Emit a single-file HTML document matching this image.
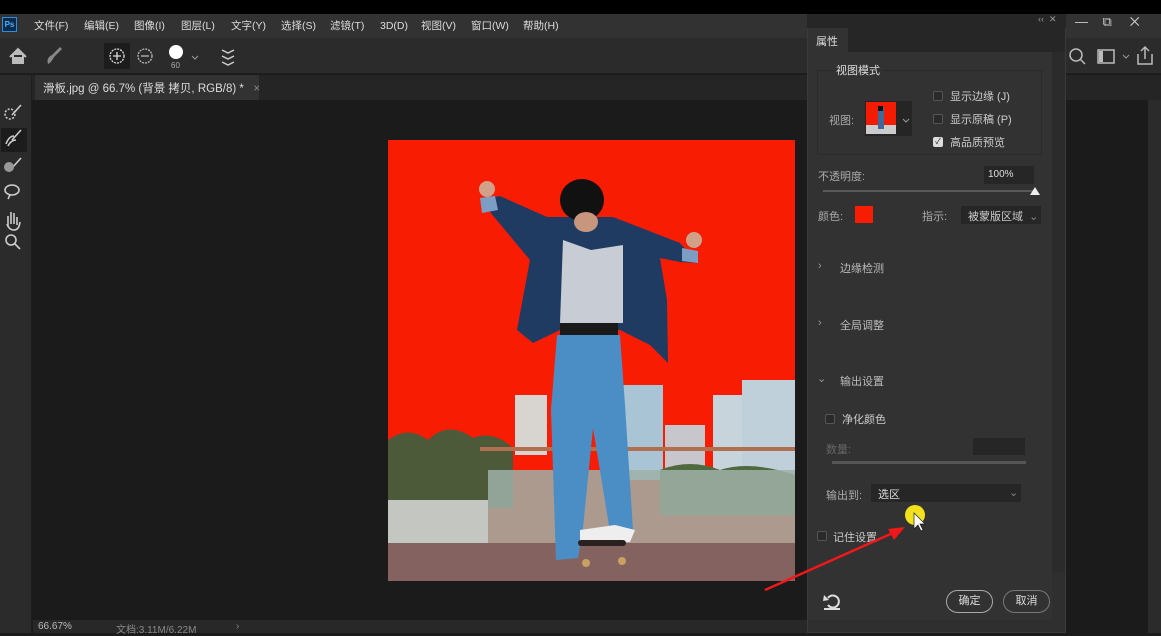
<!DOCTYPE html>
<html><head><meta charset="utf-8"><style>
*{margin:0;padding:0;box-sizing:border-box}
body{width:1161px;height:633px;overflow:hidden;background:#1b1b1b;font-family:"Liberation Sans","Noto Sans CJK SC",sans-serif;color:#ccc;position:relative;font-size:11px}
.a{position:absolute}
.t{position:absolute;white-space:nowrap}
.m{position:absolute;top:19px;font-size:10.5px;line-height:14px;color:#ddd;white-space:nowrap}
.cb{position:absolute;width:10px;height:10px;border:1px solid #555;border-radius:2px;background:#2a2a2a}
</style></head><body>
<div class="a" style="left:0;top:0;width:1161px;height:14px;background:#000"></div>
<div class="a" style="left:0;top:14px;width:1161px;height:24px;background:#323232"></div>
<div class="a" style="left:2px;top:17px;width:15px;height:15px;background:#0c2a4a;border:1px solid #2f8de0;color:#4fb0ff;font-size:8px;line-height:13px;text-align:center;font-weight:bold">Ps</div>
<span class="m" style="left:34px">文件(F)</span><span class="m" style="left:84px">编辑(E)</span><span class="m" style="left:134px">图像(I)</span><span class="m" style="left:181px">图层(L)</span><span class="m" style="left:231px">文字(Y)</span><span class="m" style="left:281px">选择(S)</span><span class="m" style="left:330px">滤镜(T)</span><span class="m" style="left:380px">3D(D)</span><span class="m" style="left:421px">视图(V)</span><span class="m" style="left:471px">窗口(W)</span><span class="m" style="left:523px">帮助(H)</span>
<div class="t" style="left:1075px;top:14px;font-size:13px;color:#ccc">—&nbsp;&nbsp;&nbsp;&nbsp;⧉&nbsp;&nbsp;&nbsp;&nbsp;&nbsp;✕</div>
<div class="a" style="left:0;top:38px;width:1161px;height:36px;background:#2b2b2b;border-bottom:1px solid #1e1e1e"></div>
<svg class="a" style="left:0;top:38px" width="260" height="36">
<path d="M10 19 L18 11 L26 19 M13 17 V25 H23 V17" fill="#bbb" stroke="#bbb" stroke-width="2"/>
<path d="M48 26 q-2-6 4-9 l8-8 2 2 -8 8 q-3 6-6 7z" fill="#888"/>
<rect x="104" y="5" width="26" height="26" fill="#1c1c1c"/>
<circle cx="117" cy="18" r="7" fill="none" stroke="#ddd" stroke-width="1.3" stroke-dasharray="2 1"/><path d="M113 18h8M117 14v8" stroke="#ddd" stroke-width="1.3"/>
<circle cx="145" cy="18" r="7" fill="none" stroke="#bbb" stroke-width="1.3" stroke-dasharray="2 1"/><path d="M141 18h8" stroke="#bbb" stroke-width="1.3"/>
<circle cx="176" cy="14" r="7" fill="#fff"/><text x="171" y="30" font-size="8" fill="#aaa">60</text>
<path d="M192 18l3 3 3-3" stroke="#999" fill="none"/>
<path d="M222 12l6 3 6-3 M222 18l6 3 6-3 M222 24l6 3 6-3" stroke="#ccc" fill="none" stroke-width="1.5"/>
</svg>
<svg class="a" style="left:1066px;top:44px" width="95" height="26"><circle cx="10" cy="11" r="6" stroke="#bbb" stroke-width="1.5" fill="none"/><path d="M14 15l5 5" stroke="#bbb" stroke-width="1.5"/><rect x="32" y="6" width="16" height="13" stroke="#bbb" stroke-width="1.5" fill="none"/><rect x="33" y="7" width="4" height="11" fill="#bbb"/><path d="M57 11l3 3 3-3" stroke="#999" fill="none"/><path d="M72 10v10h14V10 M79 15V3 M75 7l4-4 4 4" stroke="#bbb" stroke-width="1.5" fill="none"/></svg>
<div class="a" style="left:0;top:75px;width:1161px;height:25px;background:#252525"></div>
<div class="a" style="left:35px;top:75px;width:224px;height:25px;background:#323232"></div>
<div class="t" style="left:43px;top:80px;font-size:11.5px;color:#ddd">滑板.jpg @ 66.7% (背景 拷贝, RGB/8) *&nbsp;&nbsp;&nbsp;<span style="color:#888">×</span></div>
<div class="a" style="left:0;top:75px;width:32px;height:558px;background:#2b2b2b;border-right:1px solid #1e1e1e"></div>
<div class="a" style="left:1px;top:128px;width:26px;height:24px;background:#1c1c1c"></div>
<svg class="a" style="left:0;top:98px" width="32" height="160">
<g stroke="#ccc" stroke-width="1.6" fill="none">
<circle cx="10" cy="16" r="5" stroke-dasharray="2 1.5"/><path d="M12 17l9-10"/>
<path d="M6 46q3-8 8-8M8 48q3-6 8-6M12 42l9-10"/>
<path d="M12 70l9-10"/>
<ellipse cx="12" cy="92" rx="7" ry="5"/><path d="M10 97l-2 4"/>
<path d="M8 128v-10M11 126v-12M14 126v-11M17 127v-8M7 126q2 6 7 6t6-8"/>
<circle cx="11" cy="142" r="5"/><path d="M15 146l5 5"/>
</g>
<circle cx="9" cy="69" r="5" fill="#999"/>
</svg>
<div class="a" style="left:33px;top:620px;width:775px;height:13px;background:#282828"></div>
<div class="t" style="left:38px;top:621px;font-size:10px;color:#bbb">66.67%</div>
<div class="t" style="left:116px;top:621px;font-size:10px;color:#888">文档:3.11M/6.22M</div>
<div class="t" style="left:236px;top:621px;font-size:10px;color:#888">›</div>
<svg class="a" style="left:388px;top:140px" width="407" height="441" viewBox="388 140 407 441">
<rect x="388" y="140" width="407" height="441" fill="#f81c02"/>
<rect x="515" y="395" width="32" height="60" fill="#d8d4d0"/>
<rect x="605" y="385" width="58" height="95" fill="#a9c4d4"/>
<rect x="665" y="425" width="40" height="55" fill="#c6c6cc"/>
<rect x="713" y="395" width="35" height="100" fill="#c8d4dc"/>
<rect x="742" y="380" width="53" height="115" fill="#c0d0da"/>
<path d="M388 440 q20-15 40 0 q20-20 45 -2 q20-8 40 10 v60 H388z" fill="#4d5a3a"/>
<path d="M660 470 q30-12 60 0 q30-10 75 5 v40 H660z" fill="#4f6a3e"/>
<rect x="388" y="500" width="100" height="45" fill="#c4c6c2"/>
<rect x="488" y="470" width="307" height="75" fill="#9fb0a8" opacity=".85"/>
<rect x="480" y="447" width="315" height="4" fill="#b07050"/>
<rect x="388" y="543" width="407" height="38" fill="#84625f"/>
<path d="M480 200 L500 196 L547 217 L613 217 L680 243 L698 263 L680 262 L660 258 L667 300 L668 363 L650 345 L620 330 L560 330 L533 343 L517 330 L530 260 Z" fill="#1f3b62"/>
<path d="M480 198l15-2 3 14-16 3z" fill="#7c9ec4"/>
<path d="M682 248l16 3 0 12-16-2z" fill="#7c9ec4"/>
<path d="M563 240 l28 10 32-5 0 78 -63 0z" fill="#c8ccd4"/>
<rect x="560" y="323" width="58" height="12" fill="#1a1a1a"/>
<path d="M557 335 h63 l5 70 8 125 -22 8 -18-110 -10 100 -5 30 -22 2 -5-150z" fill="#4b8ec6"/>
<ellipse cx="582" cy="200" rx="22" ry="21" fill="#111"/>
<ellipse cx="586" cy="222" rx="12" ry="10" fill="#c8957d"/>
<circle cx="487" cy="189" r="8" fill="#d0a088"/><circle cx="694" cy="240" r="8" fill="#d0a088"/>
<path d="M580 530 l35-5 20 5 -5 12 -50 3z" fill="#eee"/>
<rect x="578" y="540" width="48" height="6" rx="3" fill="#2a2020"/>
<circle cx="586" cy="563" r="4" fill="#c9a060"/><circle cx="622" cy="561" r="4" fill="#c9a060"/>
</svg>
<div class="a" style="left:1148px;top:100px;width:13px;height:533px;background:#2b2b2b"></div>
<div class="a" style="left:807px;top:14px;width:259px;height:619px;background:#2f2f2f;border:1px solid #3a3a3a"></div>
<div class="a" style="left:807px;top:14px;width:259px;height:14px;background:#262626"></div>
<div class="t" style="left:1038px;top:14px;font-size:9px;color:#999">‹‹&nbsp;&nbsp;✕</div>
<div class="a" style="left:808px;top:28px;width:257px;height:24px;background:#262626"></div>
<div class="a" style="left:808px;top:28px;width:40px;height:24px;background:#323232"></div>
<div class="t" style="left:816px;top:33px;font-size:11px;color:#ddd">属性</div>
<div class="a" style="left:808px;top:52px;width:244px;height:568px;background:#323232"></div>
<div class="a" style="left:1052px;top:52px;width:13px;height:520px;background:#2b2b2b"></div>
<div class="a" style="left:817px;top:70px;width:225px;height:85px;border:1px solid #2a2a2a"></div>
<div class="t" style="left:834px;top:62px;font-size:11px;color:#ddd;background:#323232;padding:0 2px">视图模式</div>
<div class="t" style="left:829px;top:112px;color:#aaa">视图:</div>
<svg class="a" style="left:865px;top:101px" width="47" height="35"><rect width="47" height="35" fill="#252525"/><rect x="1" y="1" width="30" height="32" fill="#f31c02"/><rect x="1" y="24" width="30" height="9" fill="#ccc"/><rect x="13" y="6" width="6" height="22" fill="#3d6a9a"/><rect x="13" y="5" width="5" height="5" fill="#111"/><path d="M38 18l3 3 3-3" stroke="#999" fill="none"/></svg>
<div class="cb" style="left:933px;top:91px"></div><div class="t" style="left:950px;top:88px;color:#ccc">显示边缘 (J)</div>
<div class="cb" style="left:933px;top:114px"></div><div class="t" style="left:950px;top:111px;color:#ccc">显示原稿 (P)</div>
<div class="cb" style="left:933px;top:137px;background:#ddd;border-color:#ddd;color:#222;font-size:8px;line-height:8px;text-align:center">✓</div><div class="t" style="left:950px;top:134px;color:#ccc">高品质预览</div>
<div class="t" style="left:818px;top:168px;color:#aaa">不透明度:</div>
<div class="a" style="left:984px;top:166px;width:50px;height:18px;background:#262626"></div>
<div class="t" style="left:988px;top:169px;font-size:10px;color:#ddd">100%</div>
<div class="a" style="left:823px;top:190px;width:212px;height:2px;background:#5a5a5a"></div>
<div class="a" style="left:1030px;top:187px;width:0;height:0;border-left:5px solid transparent;border-right:5px solid transparent;border-bottom:8px solid #eee"></div>
<div class="t" style="left:818px;top:208px;color:#aaa">颜色:</div>
<div class="a" style="left:855px;top:206px;width:18px;height:17px;background:#f81c02"></div>
<div class="t" style="left:922px;top:208px;color:#aaa">指示:</div>
<div class="a" style="left:961px;top:206px;width:80px;height:18px;background:#262626"></div>
<div class="t" style="left:968px;top:208px;color:#ccc">被蒙版区域&nbsp;&nbsp;<span style="color:#888">⌄</span></div>
<div class="t" style="left:818px;top:260px;color:#999">›</div><div class="t" style="left:840px;top:260px;color:#bbb">边缘检测</div>
<div class="t" style="left:818px;top:317px;color:#999">›</div><div class="t" style="left:840px;top:317px;color:#bbb">全局调整</div>
<div class="t" style="left:817px;top:372px;color:#999">⌄</div><div class="t" style="left:840px;top:373px;color:#bbb">输出设置</div>
<div class="cb" style="left:825px;top:414px"></div><div class="t" style="left:842px;top:411px;color:#ccc">净化颜色</div>
<div class="t" style="left:826px;top:441px;color:#666">数量:</div>
<div class="a" style="left:973px;top:438px;width:52px;height:17px;background:#262626"></div>
<div class="a" style="left:832px;top:461px;width:194px;height:3px;background:#555"></div>
<div class="t" style="left:826px;top:487px;color:#aaa">输出到:</div>
<div class="a" style="left:871px;top:484px;width:150px;height:18px;background:#262626"></div>
<div class="t" style="left:878px;top:486px;color:#ddd">选区</div><div class="t" style="left:1009px;top:486px;color:#888">⌄</div>
<div class="cb" style="left:817px;top:531px"></div><div class="t" style="left:833px;top:529px;color:#ccc">记住设置</div>
<svg class="a" style="left:822px;top:591px" width="22" height="20"><path d="M6 7a6 6 0 1 1 0 7" stroke="#ddd" stroke-width="2" fill="none"/><path d="M2 4l5 5-6 1z" fill="#ddd"/><path d="M2 18h16" stroke="#ddd" stroke-width="2"/></svg>
<div class="a" style="left:946px;top:590px;width:47px;height:23px;border:1.5px solid #aaa;border-radius:12px;text-align:center;line-height:20px;color:#ddd">确定</div>
<div class="a" style="left:1003px;top:590px;width:47px;height:23px;border:1.5px solid #777;border-radius:12px;text-align:center;line-height:20px;color:#ddd">取消</div>
<div class="a" style="left:905px;top:505px;width:20px;height:20px;border-radius:50%;background:#f3e11c"></div>
<svg class="a" style="left:760px;top:505px" width="170" height="90"><path d="M5 85 L135 27" stroke="#f01818" stroke-width="2.5"/><path d="M145 22 L128 24 L134 35z" fill="#f01818"/><path d="M154 8v16l4-4 3 6 2-1-3-6h5z" fill="#fff" stroke="#222" stroke-width=".7"/></svg>
</body></html>
